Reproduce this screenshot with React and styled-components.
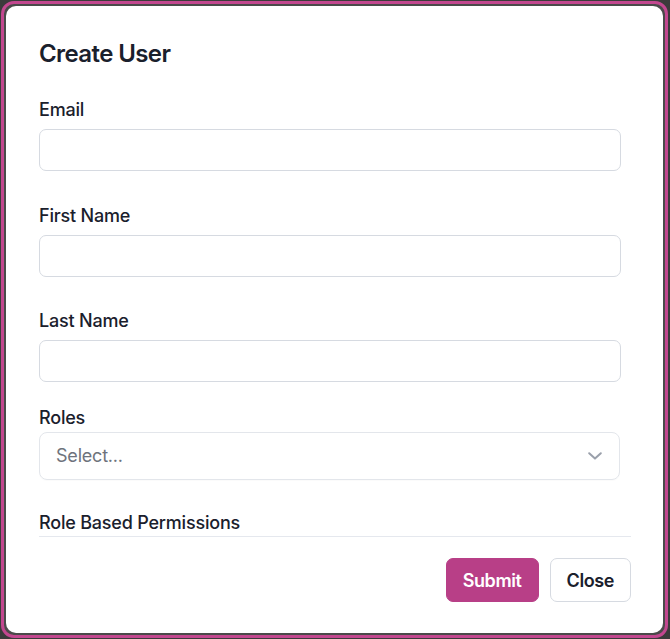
import React from "react";
import styled, { createGlobalStyle } from "styled-components";

const Global = createGlobalStyle`
  html, body { margin: 0; padding: 0; background: #3b3b3b; }
  * { box-sizing: border-box; }
  body { font-family: Inter, "Noto Sans", "Liberation Sans", sans-serif; color: #1a202c; }
`;

const Frame = styled.div`
  height: 639px;
  padding: 1px 2px 1.5px 1px;
  display: flex;
`;

const Window = styled.div`
  flex: 1;
  display: flex;
  border: 3px solid #c2478f;
  border-radius: 13px;
  background: #4a4a4a;
  padding: 2px;
`;

const Modal = styled.div`
  flex: 1;
  display: flex;
  flex-direction: column;
  background: #ffffff;
  border-radius: 10px;
  padding: 32px 32px 30px 33px;
`;

const Title = styled.h2`
  margin: 0 0 28px;
  font-size: 24px;
  line-height: 32px;
  font-weight: 600;
  letter-spacing: -0.6px;
  color: #1a202c;
`;

const Field = styled.div`
  display: flex;
  flex-direction: column;
  margin-bottom: ${(p) => p.$gap}px;
`;

const Label = styled.label`
  font-size: 18px;
  line-height: 24px;
  font-weight: 500;
  letter-spacing: -0.2px;
  color: #1a202c;
  margin-bottom: ${(p) => p.$gap ?? 7}px;
`;

const Input = styled.input`
  height: 42px;
  margin: 0 10px 0 0;
  border: 1px solid #d6dae1;
  border-radius: 7px;
  background: #fff;
  font: inherit;
  font-size: 18px;
  padding: 0 16px;
  outline: none;
`;

const SelectBox = styled.div`
  height: 48px;
  margin-right: 11px;
  border: 1px solid #e3e6eb;
  border-radius: 8px;
  display: flex;
  align-items: center;
  justify-content: space-between;
  padding: 0 17px 0 16px;
  box-shadow: 0 1px 1px rgba(0, 0, 0, 0.02);
`;

const Placeholder = styled.span`
  font-size: 18px;
  line-height: 24px;
  letter-spacing: -0.2px;
  color: #6e737c;
`;

const SectionTitle = styled.div`
  font-size: 18px;
  line-height: 24px;
  font-weight: 500;
  letter-spacing: -0.2px;
  color: #1a202c;
  padding-bottom: 1px;
  border-bottom: 1px solid #e5e8ee;
`;

const Footer = styled.div`
  margin-top: 21px;
  display: flex;
  justify-content: flex-end;
  gap: 11px;
`;

const Button = styled.button`
  height: 44px;
  padding: 0 16px;
  border-radius: 7px;
  font-family: inherit;
  font-size: 18px;
  font-weight: 600;
  letter-spacing: -0.4px;
  cursor: pointer;
  background: ${(p) => (p.$primary ? "#b83f87" : "#ffffff")};
  color: ${(p) => (p.$primary ? "#ffffff" : "#1a202c")};
  border: 1px solid ${(p) => (p.$primary ? "#b83f87" : "#d6dae1")};
`;

const Chevron = () => (
  <svg width="14" height="8" viewBox="0 0 14 8" fill="none">
    <path d="M1.2 1.2 L7 6.6 L12.8 1.2" stroke="#9aa0ab" strokeWidth="2" strokeLinecap="round" strokeLinejoin="round" />
  </svg>
);

export default function App() {
  return (
    <>
      <Global />
      <Frame>
        <Window>
          <Modal>
            <Title>Create User</Title>
            <Field $gap={32.5}>
              <Label>Email</Label>
              <Input type="email" />
            </Field>
            <Field $gap={32.5}>
              <Label>First Name</Label>
              <Input type="text" />
            </Field>
            <Field $gap={24}>
              <Label>Last Name</Label>
              <Input type="text" />
            </Field>
            <Field $gap={31}>
              <Label $gap={2}>Roles</Label>
              <SelectBox>
                <Placeholder>Select...</Placeholder>
                <Chevron />
              </SelectBox>
            </Field>
            <SectionTitle>Role Based Permissions</SectionTitle>
            <Footer>
              <Button $primary>Submit</Button>
              <Button>Close</Button>
            </Footer>
          </Modal>
        </Window>
      </Frame>
    </>
  );
}
